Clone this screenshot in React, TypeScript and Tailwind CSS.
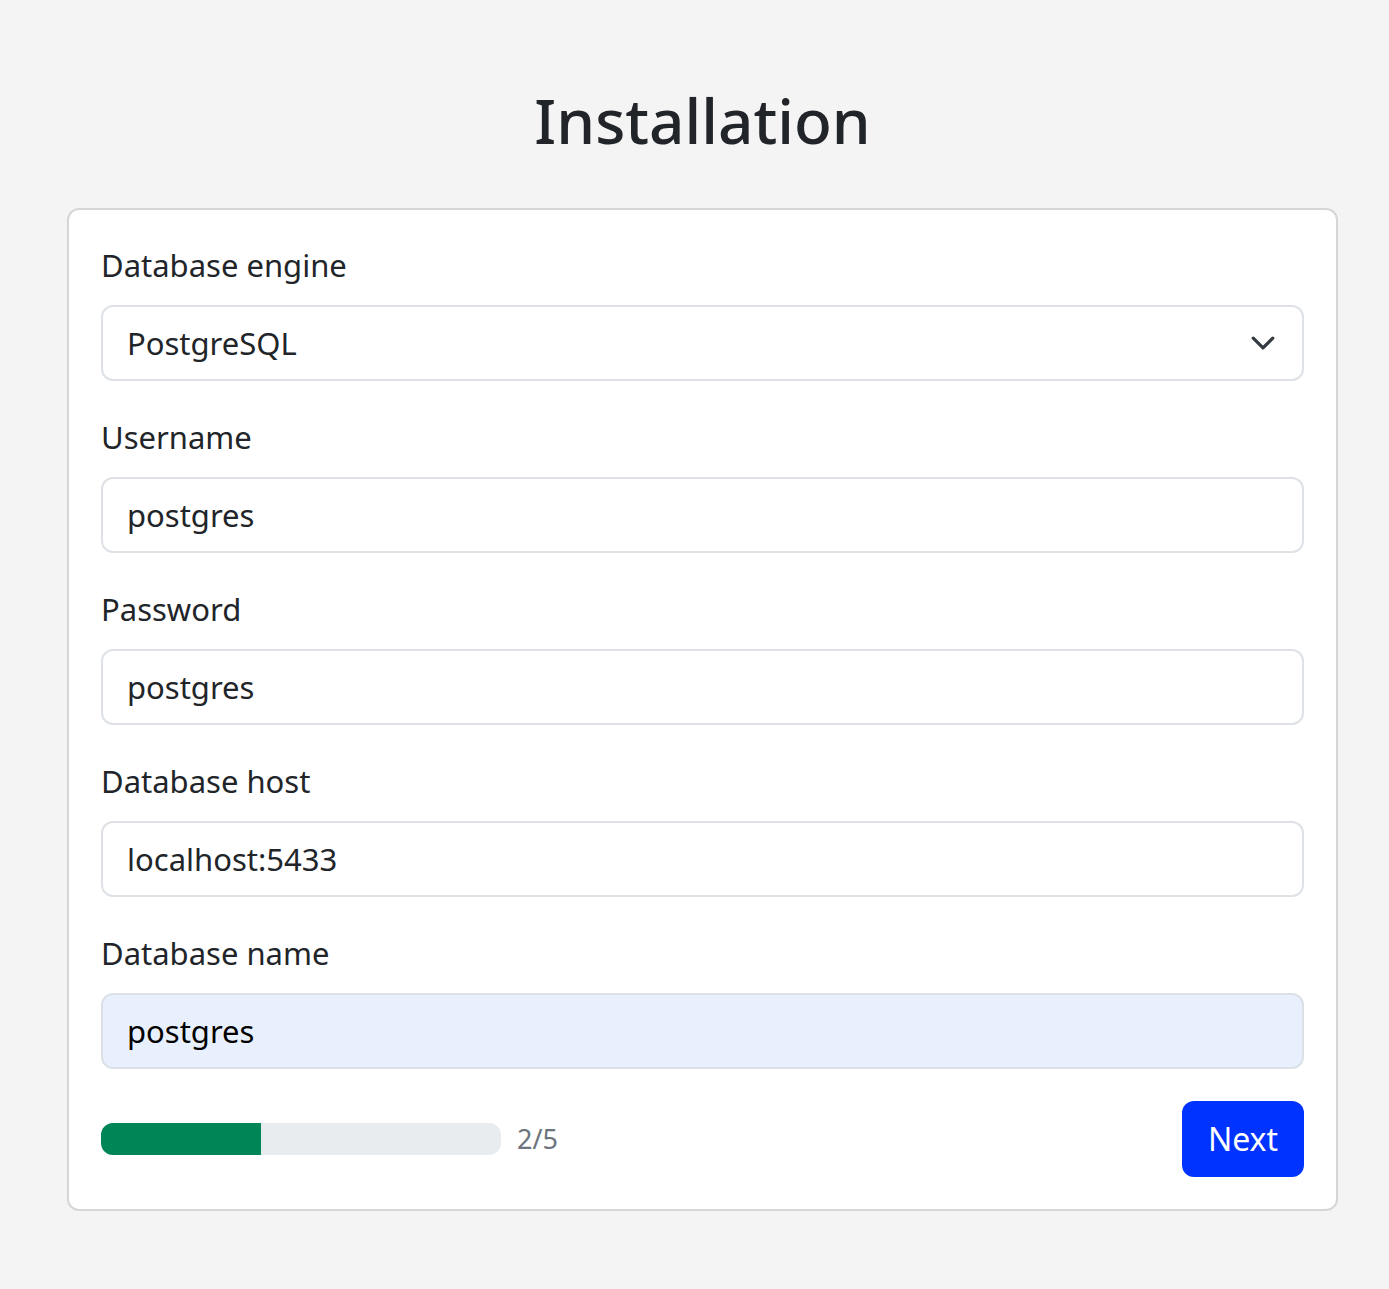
import React from "react";

const fields = [
  { label: "Username", value: "postgres" },
  { label: "Password", value: "postgres" },
  { label: "Database host", value: "localhost:5433" },
];

export default function App() {
  return (
    <div
      className="min-h-[1289px] w-full bg-[#f4f4f4] text-[#212529]"
      style={{ fontFamily: '"Noto Sans", "Open Sans", sans-serif' }}
    >
      <div className="pl-[67px] pr-[51px] pt-[76px] pb-[78px]">
        <h1 className="text-center text-[62px] font-medium leading-[88px] mb-[44px]">Installation</h1>
        <div className="rounded-[12px] border-2 border-[#d6d6d6] bg-white px-[32px] pt-[31px] pb-[32px]">
          <div className="flex flex-col">
            <label className="text-[31px] leading-[48px] mb-[16px]">Database engine</label>
            <div className="flex h-[76px] items-center justify-between rounded-[12px] border-2 border-[#dee2e6] pl-[24px] pr-[26px] text-[31px]">
              <span>PostgreSQL</span>
              <svg width="26" height="26" viewBox="0 0 16 16" fill="none" stroke="#343a40" strokeWidth="2" strokeLinecap="round" strokeLinejoin="round">
                <path d="m2 5 6 6 6-6" />
              </svg>
            </div>
          </div>
          {fields.map((f) => (
            <div key={f.label} className="mt-[32px] flex flex-col">
              <label className="text-[31px] leading-[48px] mb-[16px]">{f.label}</label>
              <div className="flex h-[76px] items-center rounded-[12px] border-2 border-[#dee2e6] px-[24px] text-[31px]">
                {f.value}
              </div>
            </div>
          ))}
          <div className="mt-[32px] flex flex-col">
            <label className="text-[31px] leading-[48px] mb-[16px]">Database name</label>
            <div className="flex h-[76px] items-center rounded-[12px] border-2 border-[#dce1e8] bg-[#e8f0fe] px-[24px] text-[31px] text-black">
              postgres
            </div>
          </div>
          <div className="mt-[32px] flex items-center justify-between">
            <div className="flex items-center gap-[16px]">
              <div className="h-[32px] w-[400px] overflow-hidden rounded-[12px] bg-[#e9ecef]">
                <div className="h-full w-[160px] bg-[#008557]" />
              </div>
              <span className="text-[27px] text-[#6c757d]">2/5</span>
            </div>
            <button className="h-[76px] w-[122px] rounded-[12px] bg-[#0033ff] text-[32px] text-white">Next</button>
          </div>
        </div>
      </div>
    </div>
  );
}
